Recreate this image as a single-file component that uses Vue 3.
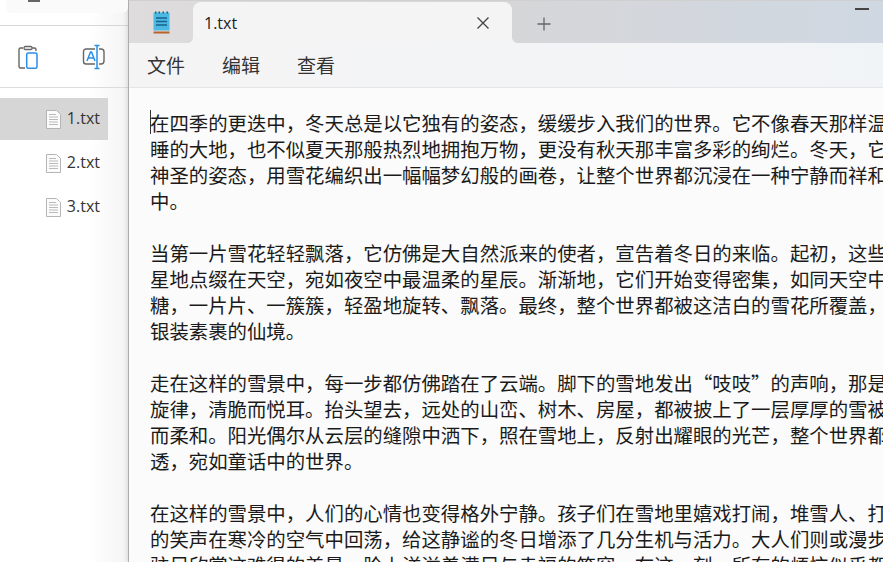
<script setup>
const files = ['1.txt', '2.txt', '3.txt']
const source = [
  ['在四季的更迭中,冬天总是以它独有的姿态,缓缓步入我们的世界。它不像春天那样温', '睡的大地,也不似夏天那般热烈地拥抱万物,更没有秋天那丰富多彩的绚烂。冬天,它', '神圣的姿态,用雪花编织出一幅幅梦幻般的画卷,让整个世界都沉浸在一种宁静而祥和', '中。'],
  ['当第一片雪花轻轻飘落,它仿佛是大自然派来的使者,宣告着冬日的来临。起初,这些', '星地点缀在天空,宛如夜空中最温柔的星辰。渐渐地,它们开始变得密集,如同天空中', '糖,一片片、一簇簇,轻盈地旋转、飘落。最终,整个世界都被这洁白的雪花所覆盖,', '银装素裹的仙境。'],
  ['走在这样的雪景中,每一步都仿佛踏在了云端。脚下的雪地发出“吱吱”的声响,那是', '旋律,清脆而悦耳。抬头望去,远处的山峦、树木、房屋,都被披上了一层厚厚的雪被', '而柔和。阳光偶尔从云层的缝隙中洒下,照在雪地上,反射出耀眼的光芒,整个世界都', '透,宛如童话中的世界。'],
  ['在这样的雪景中,人们的心情也变得格外宁静。孩子们在雪地里嬉戏打闹,堆雪人、打', '的笑声在寒冷的空气中回荡,给这静谧的冬日增添了几分生机与活力。大人们则或漫步', '驻足欣赏这难得的美景,脸上洋溢着满足与幸福的笑容。在这一刻,所有的烦恼似乎都'],
]
const paragraphs = source.map(p => p.map(l => l.replace(/,/g, '\uFF0C')))
</script>

<template>
  <div class="screen">
    <aside class="explorer">
      <div class="top"><div class="search"><i class="searchmark"></i></div></div>
      <div class="tools">
        <svg width="24" height="26" viewBox="0 0 24 26" fill="none">
          <path d="M6 4H3.500A1.500 1.500 0 0 0 2 5.500v17A1.500 1.500 0 0 0 3.500 24H8M15 4h2.500A1.500 1.500 0 0 1 19 5.500V7" stroke="#666" stroke-width="1.400"/>
          <rect x="7" y="2.500" width="8" height="3" rx="1.200" stroke="#666" stroke-width="1.300"/>
          <rect x="9.700" y="9" width="10.300" height="15.300" rx="1.500" stroke="#2b8fe6" stroke-width="1.500"/>
        </svg>
        <svg width="24" height="26" viewBox="0 0 24 26" fill="none">
          <path d="M13 5H4a2.500 2.500 0 0 0-2.500 2.500v10A2.500 2.500 0 0 0 4 20h9M17 5h2a3 3 0 0 1 3 3v9a3 3 0 0 1-3 3h-2" stroke="#666" stroke-width="1.400"/>
          <path d="M5 17l3.500-9h1l3.500 9M6.300 14h5.400" stroke="#2b8fe6" stroke-width="1.500"/>
          <path d="M12.500 1.500h5M12.500 24.500h5M15 1.500v23" stroke="#2b8fe6" stroke-width="1.500"/>
        </svg>
      </div>
      <ul class="files">
        <li v-for="(f, i) in files" :key="f" :class="{ active: i === 0 }">
          <svg width="15" height="19" viewBox="0 0 15 19">
            <path d="M.5.500h10l4 4v14H.5z" fill="#fbfbfb" stroke="#b5b5b5"/>
            <path d="M3 4.500h7M3 7h9M3 9.500h9M3 12h9M3 14.500h9" stroke="#bbb"/>
          </svg>
          <span>{{ f }}</span>
        </li>
      </ul>
    </aside>
    <main class="notepad">
      <div class="tabbar">
        <div class="appicon">
          <svg width="17" height="23" viewBox="0 0 17 23">
            <rect x="0.500" y="1.500" width="16" height="18" fill="#4cb9e2"/>
            <path d="M2 1.500h1.500M5.500 1.500H7M9.500 1.500H11M13.500 1.500H15" stroke="#1f5f86" stroke-width="2"/>
            <path d="M3 7h11M3 10.500h11M3 14h11" stroke="#17628f" stroke-width="1.300"/>
            <rect x="0.500" y="20.500" width="16" height="2" fill="#b8632b"/>
          </svg>
        </div>
        <div class="tab">
          <span class="tabname">1.txt</span>
          <svg class="close" width="14" height="14" viewBox="0 0 14 14"><path d="M1.500 1.500l11 11M12.500 1.500l-11 11" stroke="#444" stroke-width="1.300"/></svg>
        </div>
        <svg class="plus" width="16" height="16" viewBox="0 0 16 16"><path d="M8 1.500v13M1.500 8h13" stroke="#666" stroke-width="1.300"/></svg>
        <div class="minimize"></div>
      </div>
      <nav class="menu"><span>文件</span><span>编辑</span><span>查看</span></nav>
      <article class="doc">
        <div class="caret"></div>
        <div v-for="(p, i) in paragraphs" :key="i" class="para">
          <div v-for="(l, j) in p" :key="j" class="line">{{ l }}</div>
        </div>
      </article>
    </main>
  </div>
</template>

<style>
html, body { margin: 0; overflow: hidden; }
</style>

<style scoped>
.screen { display: flex; width: 883px; height: 562px; overflow: hidden; background: #fff; font-family: "Noto Sans CJK SC", sans-serif; }
.explorer { width: 128px; flex: none; background: linear-gradient(90deg, #fff 70%, #f4f4f4); border-right: 1px solid #bdbdbd; }
.top { height: 25px; border-bottom: 1px solid #d6d6d6; }
.search { position: relative; height: 13px; margin-left: 6px; border-radius: 0 0 6px 6px; background: #fafafa; }
.searchmark { position: absolute; left: 22px; top: 0; width: 12px; height: 2px; background: #666; }
.tools { height: 61px; display: flex; gap: 41px; align-items: center; padding-left: 17px; border-bottom: 1px solid #dcdcdc; }
.files { list-style: none; margin: 10px 0 0; padding: 0; width: 108px; }
.files li { height: 42px; margin-bottom: 2px; display: flex; align-items: center; justify-content: flex-end; gap: 6px; padding-right: 8px; box-sizing: border-box; font: 16px "Open Sans", sans-serif; color: #333; }
.files li span { margin-bottom: 2px; }
.files li.active { background: #d6d6d6; }
.notepad { flex: 1; min-width: 0; background: #fbfbfb; box-shadow: -2px 0 5px rgba(0,0,0,.12); }
.tabbar { height: 43px; display: flex; background: linear-gradient(90deg, #dedcdc, #d6d6d8 50%, #cfd8e2); position: relative; border-top: 1px solid #d0d0d0; box-sizing: border-box; }
.appicon { width: 64px; display: flex; justify-content: center; padding-top: 10px; box-sizing: border-box; }
.tab { position: relative; width: 319px; height: 41px; margin-top: 1px; display: flex; align-items: center; justify-content: space-between; padding: 0 22px 0 11px; box-sizing: border-box; background: #f5f4f5; border-radius: 8px 8px 0 0; }
.tab::before, .tab::after { content: ""; position: absolute; bottom: 0; width: 5px; height: 5px; }
.tab::before { left: -5px; background: radial-gradient(circle at 0 0, transparent 4.500px, #f5f4f5 5px); }
.tab::after { right: -5px; background: radial-gradient(circle at 100% 0, transparent 4.500px, #f5f4f5 5px); }
.tabname { font: 16px "Open Sans", sans-serif; color: #222; }
.plus { margin: 15px 0 0 24px; }
.minimize { position: absolute; right: 14px; top: 7px; width: 14px; height: 1.5px; background: #444; }
.menu { height: 44px; display: flex; gap: 37px; align-items: center; padding-left: 18px; background: linear-gradient(90deg, #f5f4f5, #f1f4f7); border-bottom: 1px solid #e5e5e5; font-size: 19px; color: #333; }
.menu span { margin-bottom: 2px; }
.doc { padding: 22px 0 0 21px; font-size: 19.400px; line-height: 26px; color: #1a1a1a; white-space: nowrap; position: relative; }
.para { margin-bottom: 26px; }
.caret { position: absolute; left: 21px; top: 22px; width: 1px; height: 24px; background: #333; }
</style>
